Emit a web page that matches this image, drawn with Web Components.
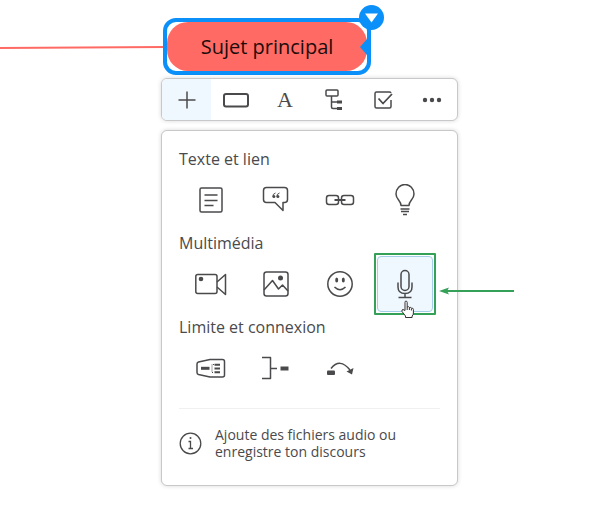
<!DOCTYPE html>
<html lang="fr">
<head>
<meta charset="utf-8">
<meta name="viewport" content="width=device-width, initial-scale=1">
<title>Sujet principal</title>
<style>
  body {
    margin: 0;
    background: #fff;
    color: #4a4a4c;
    font-family: "Open Sans", "Noto Sans", sans-serif;
    --accent: #0a90f8;
    --topic: #ff6b64;
    --active: #f0f8ff;
    --mark: #35a058;
  }
</style>
</head>
<body>
<mind-map>
  <map-topic slot="topic">Sujet principal</map-topic>
  <tool-bar slot="tools"></tool-bar>
  <insert-menu slot="menu">
    <menu-section label="Texte et lien">
      <menu-tile icon="note" label="Note"></menu-tile>
      <menu-tile icon="comment" label="Commentaire"></menu-tile>
      <menu-tile icon="link" label="Lien"></menu-tile>
      <menu-tile icon="bulb" label="Idée"></menu-tile>
    </menu-section>
    <menu-section label="Multimédia">
      <menu-tile icon="video" label="Vidéo"></menu-tile>
      <menu-tile icon="image" label="Image"></menu-tile>
      <menu-tile icon="smiley" label="Emoji"></menu-tile>
      <menu-tile icon="mic" label="Audio" selected></menu-tile>
    </menu-section>
    <menu-section label="Limite et connexion">
      <menu-tile icon="boundary" label="Limite"></menu-tile>
      <menu-tile icon="summary" label="Résumé"></menu-tile>
      <menu-tile icon="connection" label="Connexion"></menu-tile>
    </menu-section>
    <info-hint slot="hint">Ajoute des fichiers audio ou enregistre ton discours</info-hint>
  </insert-menu>
</mind-map>

<script>
// All icons share a 32x32 box centred on 16,16
const ICONS = {
  plus: '<path d="M16 7.500v17M7.500 16h17"/>',
  shape: '<rect x="4" y="10" width="24" height="12.500" rx="2" stroke-width="2"/>',
  structure: '<rect x="8" y="6" width="12" height="6" rx="1"/><path d="M13.500 12v11q0 1.500 1.500 1.500h5M13.500 18h6"/><path d="M19 18h5M19 24.500h5" stroke-width="3"/>',
  task: '<path d="M24 16v6.500q0 1.500-1.500 1.500h-13Q8 24 8 22.500V9.500Q8 8 9.500 8h13q1 0 1.500 1"/><path d="M11.500 14.500l4.500 5 9-9.500" stroke-width="1.800"/>',
  more: '<g fill="currentColor" stroke="none"><circle cx="9" cy="16" r="2.200"/><circle cx="16" cy="16" r="2.200"/><circle cx="23" cy="16" r="2.200"/></g>',
  note: '<rect x="5" y="4" width="22" height="24" rx="1.500"/><path d="M9.500 11h13M9.500 16.500h13M9.500 21.500h9"/>',
  comment: '<path d="M6.500 3.500h18q3 0 3 3v9q0 3-3 3h-1.500v8l-8-8H6.500q-3 0-3-3v-9q0-3 3-3z"/><path d="M15.500 9q-3 1-2.500 3.500M19.500 9q-3 1-2.500 3.500" stroke-width="1"/><g fill="currentColor" stroke="none"><circle cx="13.900" cy="12.500" r="1.500"/><circle cx="17.900" cy="12.500" r="1.500"/></g>',
  link: '<rect x="2.500" y="11.500" width="12" height="9" rx="2.500"/><rect x="17.500" y="11.500" width="12" height="9" rx="2.500"/><path d="M10.500 16h11" stroke-width="2"/>',
  bulb: '<path d="M12 21.500c0-5-5-6-5-11.500a9 9.500 0 0 1 18 0c0 5.500-5 6.500-5 11.500z"/><path d="M11.500 25h9M12 27.500h8M14 30.500h4" stroke-width="1.500"/>',
  video: '<rect x="0.800" y="6.500" width="21.200" height="19" rx="2"/><path d="M22 14l8.500-7.500v20L22 19"/><circle cx="6" cy="11" r="2.300" fill="currentColor" stroke="none"/>',
  image: '<rect x="4" y="4" width="24" height="24" rx="2.500"/><path d="M4 22l8.500-9.500 6 8.500 4-4 5.500 6"/><circle cx="20.500" cy="10" r="2.500" fill="currentColor" stroke="none"/>',
  smiley: '<circle cx="16" cy="16" r="12.200"/><g fill="currentColor" stroke="none"><ellipse cx="12.700" cy="12" rx="1.500" ry="2.500"/><ellipse cx="19.300" cy="12" rx="1.500" ry="2.500"/></g><path d="M10.500 19q5.500 5.500 11 0"/>',
  mic: '<rect x="12" y="2.500" width="8" height="20" rx="4"/><path d="M9 14.500v4.500q0 6.500 7 6.500t7-6.500v-4.500M16 25.500v4M9.500 29.500h13"/>',
  boundary: '<path d="M15 7.500h12.500q2 0 2 2v13.500q0 2-2 2H15L3.500 22.500q-1.500-.500-1.500-2v-8.500q0-1.500 1.500-2z"/><path d="M6 16.300h8.500" stroke-width="3"/><path d="M19.500 12.800h5.500M19.500 16.500h5.500M19.500 20.200h5.500" stroke-width="2"/><path d="M19 12.500h-2v8h2" stroke-width="1" stroke-dasharray="1 1"/>',
  summary: '<path d="M2 5.500h8.500v21H2M10.500 16.500h6.500"/><path d="M20.500 16.500h8" stroke-width="4"/>',
  connection: '<rect x="3" y="18.500" width="8" height="4.500" rx="1" fill="currentColor" stroke="none"/><path d="M7 16.500q9-11 19 1.500"/><path d="M22.500 19.500l7-3.500-1.500 6.500z" fill="currentColor" stroke="none"/>'
};

function icon(name) {
  return `<svg width="32" height="32" viewBox="0 0 32 32" fill="none" stroke="currentColor" stroke-width="1.500" stroke-linejoin="round" aria-hidden="true">${ICONS[name]}</svg>`;
}

class MindMap extends HTMLElement {
  constructor() {
    super();
    this.attachShadow({ mode: 'open' });
    this.shadowRoot.innerHTML = `
      <style>
        :host {
          display: grid;
          grid-template-columns: minmax(0, 161px) 297px 1fr;
          padding: 18px 0 28px;
        }

        .branch {
          align-self: center;
          width: calc(100% + 3px);
          height: 4px;
        }

        .stack {
          grid-column: 2;
        }

        ::slotted([slot="topic"]) {
          margin-left: 2px;
        }
      </style>
      <svg class="branch" viewBox="0 0 164 4" preserveAspectRatio="none" aria-hidden="true">
        <path d="M0 3L164 2" stroke="var(--topic)" stroke-width="2"/>
      </svg>
      <slot name="topic"></slot>
      <div class="stack">
        <slot name="tools"></slot>
        <slot name="menu"></slot>
      </div>
    `;
  }
}

class MapTopic extends HTMLElement {
  constructor() {
    super();
    this.attachShadow({ mode: 'open' });
    this.shadowRoot.innerHTML = `
      <style>
        :host {
          display: block;
          position: relative;
          justify-self: start;
          border: 4px solid var(--accent);
          border-radius: 13px;
        }

        .label {
          min-width: 134px;
          padding: 11px 33px 10px;
          border-radius: 21px;
          background: var(--topic);
          color: #1b0b0a;
          font-size: 20px;
          line-height: 28px;
          text-align: center;
          white-space: nowrap;
        }

        button {
          position: absolute;
          top: -17px;
          right: -17px;
          display: flex;
          width: 25px;
          height: 25px;
          padding: 0;
          border: 0;
          border-radius: 50%;
          background: var(--accent);
        }

        .notch {
          position: absolute;
          top: 17px;
          right: 0;
        }
      </style>
      <div class="label"><slot></slot></div>
      <svg class="notch" width="7" height="16" viewBox="0 0 7 16" aria-hidden="true"><path d="M7 0v16L0 8z" fill="var(--accent)"/></svg>
      <button type="button" aria-label="Options">
        <svg width="25" height="25" viewBox="0 0 25 25" aria-hidden="true"><path d="M6 8.500h13l-6.500 9z" fill="#fff"/></svg>
      </button>
    `;
  }
}

class ToolBar extends HTMLElement {
  constructor() {
    super();
    this.attachShadow({ mode: 'open' });
    this.render();
  }

  render() {
    this.shadowRoot.innerHTML = `
      <style>
        :host {
          display: grid;
          grid-template-columns: repeat(6, 1fr);
          margin-top: 3px;
          border: 1px solid #c8c8ca;
          border-radius: 6px;
          background: #fff;
          box-shadow: 0 0 4px rgba(0, 0, 0, 0.16);
          overflow: hidden;
          position: relative;
        }

        button {
          display: flex;
          align-items: center;
          justify-content: center;
          height: 41px;
          padding: 0;
          border: 0;
          background: none;
          color: inherit;
          font: 22px/32px "Liberation Serif", serif;
        }

        button.active {
          background: var(--active);
        }
      </style>
      <button type="button" class="active" aria-label="Ajouter">${icon('plus')}</button>
      <button type="button" aria-label="Forme">${icon('shape')}</button>
      <button type="button">A</button>
      <button type="button" aria-label="Structure">${icon('structure')}</button>
      <button type="button" aria-label="Tâche">${icon('task')}</button>
      <button type="button" aria-label="Plus">${icon('more')}</button>
    `;
  }
}

class InsertMenu extends HTMLElement {
  constructor() {
    super();
    this.attachShadow({ mode: 'open' });
    this.shadowRoot.innerHTML = `
      <style>
        :host {
          display: block;
          margin-top: 9px;
          padding: 17px;
          border: 1px solid #c8c8ca;
          border-radius: 6px;
          background: #fff;
          box-shadow: 0 0 4px rgba(0, 0, 0, 0.16);
        }

        hr {
          margin: 12px 0 17px;
          border: 0;
          border-top: 1px solid #f0f0f1;
        }
      </style>
      <slot></slot>
      <hr>
      <slot name="hint"></slot>
    `;
  }
}

class MenuSection extends HTMLElement {
  constructor() {
    super();
    this.attachShadow({ mode: 'open' });
    this.shadowRoot.innerHTML = `
      <style>
        :host {
          display: block;
          margin-bottom: 4px;
        }

        h2 {
          margin: 0 0 2px;
          font-size: 16px;
          font-weight: 400;
          line-height: 22px;
        }

        .tiles {
          display: grid;
          grid-template-columns: repeat(4, 1fr);
          padding-right: 3px;
        }
      </style>
      <h2>${this.getAttribute('label')}</h2>
      <div class="tiles"><slot></slot></div>
    `;
  }
}

class MenuTile extends HTMLElement {
  constructor() {
    super();
    this.attachShadow({ mode: 'open' });
    this.render();
  }

  render() {
    const selected = this.hasAttribute('selected');
    this.shadowRoot.innerHTML = `
      <style>
        :host {
          display: flex;
          justify-content: center;
          position: relative;
        }

        button {
          display: flex;
          align-items: center;
          justify-content: center;
          position: relative;
          width: 56px;
          height: 56px;
          padding: 0;
          border: 1px solid transparent;
          border-radius: 4px;
          background: none;
          color: inherit;
        }

        :host([selected]) button {
          border-color: #a5cdea;
          background: var(--active);
        }

        :host([selected]) button::before {
          content: "";
          position: absolute;
          inset: -4px;
          border: 2px solid var(--mark);
          border-radius: 1px;
        }

        .pointer {
          position: absolute;
          top: 44px;
          left: 27px;
        }

        .arrow {
          position: absolute;
          top: 30px;
          left: 66px;
        }
      </style>
      <button type="button" aria-label="${this.getAttribute('label')}">${icon(this.getAttribute('icon'))}</button>
      ${selected ? this.marks() : ''}
    `;
  }

  // Hand pointer and the arrow that calls out the tile
  marks() {
    return `
      <svg class="pointer" width="15" height="19" viewBox="0 0 15 19" aria-hidden="true">
        <path d="M5 10.500V2.500Q5 1 6 1t1.200 1.500V7q1.600-1 2.200.500 1.400-.700 2 .700 1.900-.500 2 1.300v3.500q0 2-1.300 3v1.500H5.500V16L2 11.500Q1.500 9.500 3 9.500z" fill="#fff" stroke="#333" stroke-width="1" stroke-linejoin="round"/>
        <path d="M7.200 7v3M9.400 7.500V10M11.400 8.500V10.500" stroke="#333" stroke-width="1"/>
      </svg>
      <svg class="arrow" width="76" height="10" viewBox="0 0 76 10" aria-hidden="true">
        <path d="M7 5h68" stroke="var(--mark)" stroke-width="2"/>
        <path d="M0 5l10-3.500L8 5l2 3.500z" fill="var(--mark)"/>
      </svg>
    `;
  }
}

class InfoHint extends HTMLElement {
  constructor() {
    super();
    this.attachShadow({ mode: 'open' });
    this.shadowRoot.innerHTML = `
      <style>
        :host {
          display: flex;
          align-items: center;
          gap: 13px;
          padding-bottom: 8px;
          font-size: 14px;
          line-height: 17px;
        }

        svg {
          flex: none;
        }

        p {
          max-width: 190px;
          margin: 0;
        }
      </style>
      <svg width="23" height="23" viewBox="0 0 23 23" fill="none" stroke="currentColor" stroke-width="1.300" aria-hidden="true">
        <circle cx="11.500" cy="11.500" r="10.300"/>
        <path d="M9.500 9.500h2v7M9.500 16.500h4.500"/>
        <circle cx="11.500" cy="6" r="1" fill="currentColor" stroke="none"/>
      </svg>
      <p><slot></slot></p>
    `;
  }
}

customElements.define('mind-map', MindMap);
customElements.define('map-topic', MapTopic);
customElements.define('tool-bar', ToolBar);
customElements.define('insert-menu', InsertMenu);
customElements.define('menu-section', MenuSection);
customElements.define('menu-tile', MenuTile);
customElements.define('info-hint', InfoHint);
</script>
</body>
</html>
